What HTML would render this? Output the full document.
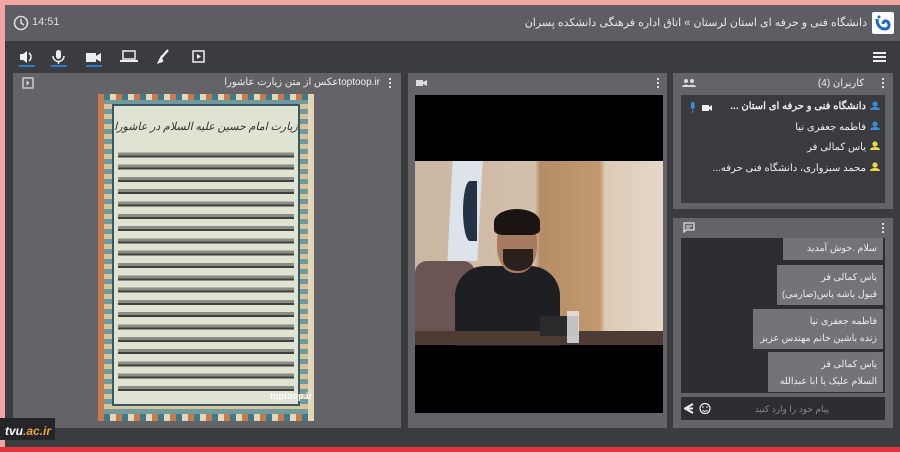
<!DOCTYPE html>
<html><head><meta charset="utf-8"><style>
*{margin:0;padding:0;box-sizing:border-box}
body{width:900px;height:452px;overflow:hidden;background:#3b3c40;font-family:"Liberation Sans","Noto Sans CJK SC",sans-serif;position:relative;color:#fff}
.a{position:absolute}
.rtl{direction:rtl;white-space:nowrap}
</style></head><body>
<div class="a" style="left:0;top:0;width:900px;height:5px;background:#f2a5a5"></div>
<div class="a" style="left:0;top:0;width:5px;height:452px;background:#f2a5a5"></div>
<div class="a" style="left:5px;top:5px;width:895px;height:36px;background:#5d5e63"></div>
<svg class="a" style="left:13px;top:15px" width="16" height="16" viewBox="0 0 16 16"><circle cx="8" cy="8" r="6.5" fill="none" stroke="#ddd" stroke-width="1.6"/><path d="M8 4v4l3 2" stroke="#ddd" stroke-width="1.5" fill="none"/></svg>
<div class="a" style="left:32px;top:16px;font-size:11px;color:#ddd">14:51</div>
<div class="a rtl" style="right:33px;top:16px;font-size:11px;color:#e8e8e8">دانشگاه فنی و حرفه ای استان لرستان » اتاق اداره فرهنگی دانشکده پسران</div>
<div class="a" style="left:872px;top:12px;width:22px;height:22px;background:#fff;border-radius:2px"><svg width="22" height="22" viewBox="0 0 22 22"><path d="M5 7c0 7 4 10 8 10s5-4 3-7c-2-2-5-1-5 2" fill="none" stroke="#1b6bc6" stroke-width="3"/><circle cx="7" cy="5" r="1.5" fill="#1b6bc6"/></svg></div>
<svg class="a" style="left:18px;top:48px" width="110" height="20" viewBox="0 0 110 20">
<path d="M2 6h3l4-3v12l-4-3H2z" fill="#eee"/><path d="M11 5a5 5 0 0 1 0 8" stroke="#eee" stroke-width="1.5" fill="none"/>
<rect x="1" y="17" width="16" height="2" fill="#2a7ad1"/>
<rect x="38" y="2" width="5" height="9" rx="2.5" fill="#eee"/><path d="M35 8a5.5 5.5 0 0 0 11 0M40.5 13v3" stroke="#eee" stroke-width="1.5" fill="none"/>
<rect x="33" y="17" width="16" height="2" fill="#2a7ad1"/>
<rect x="68" y="5" width="10" height="9" fill="#eee"/><path d="M78 8l5-3v9l-5-3z" fill="#eee"/>
<rect x="68" y="17" width="16" height="2" fill="#2a7ad1"/>
</svg>
<svg class="a" style="left:120px;top:48px" width="100" height="20" viewBox="0 0 100 20">
<rect x="3" y="3" width="12" height="8" fill="none" stroke="#eee" stroke-width="1.5"/><rect x="0" y="12" width="18" height="2" fill="#eee"/>
<path d="M48 2l-7 8M41 10l-2 4 3-1z" stroke="#eee" stroke-width="2.2" fill="#eee"/>
<rect x="73" y="3" width="11" height="11" fill="none" stroke="#eee" stroke-width="1.5"/><path d="M77 6l4 2.5-4 2.5z" fill="#eee"/>
</svg>
<div class="a" style="left:873px;top:52px;width:13px;height:2px;background:#eee;box-shadow:0 4px #eee,0 8px #eee"></div>
<div class="a" style="left:13px;top:73px;width:388px;height:355px;background:#636368"></div>
<svg class="a" style="left:22px;top:77px" width="12" height="12"><rect x="1" y="1" width="10" height="10" fill="none" stroke="#ddd" stroke-width="1.3"/><path d="M4.5 3.5l3 2.5-3 2.5z" fill="#ddd"/></svg>
<div class="a rtl" style="right:520px;top:77px;font-size:10px;color:#eee">toptoop.irعکس از متن زیارت عاشورا</div>
<div class="a" style="left:389px;top:78px;width:2px;height:2px;background:#ddd;box-shadow:0 4px #ddd,0 8px #ddd"></div>
<div class="a" style="left:98px;top:94px;width:216px;height:327px;background:repeating-linear-gradient(90deg,#c77a4c 0 6px,#3f7a86 6px 12px,#e4d7b8 12px 18px);"></div>
<div class="a" style="left:104px;top:100px;width:204px;height:314px;background:repeating-linear-gradient(0deg,#6f9a9e 0 5px,#d8c49a 5px 10px)"></div>
<div class="a" style="left:112px;top:104px;width:188px;height:302px;background:#dfe3d2;border:2px solid #3b5565;overflow:hidden">
<div class="a rtl" style="left:0;top:14px;width:184px;font-size:11px;color:#333;text-align:center;font-family:'Liberation Serif',serif;font-style:italic">زیارت امام حسین علیه السلام در عاشورا</div>
</div>
<div class="a" style="left:118px;top:150px;width:176px;height:245px;background:repeating-linear-gradient(0deg,#dfe3d2 0 4px,#3d403c 4px 6px,#8a8d84 6px 9px,#dfe3d2 9px 12.3px)"></div>
<div class="a" style="left:270px;top:391px;font-size:9px;color:#fff;font-weight:bold">toptoop.ir</div>
<div class="a" style="left:408px;top:73px;width:259px;height:355px;background:#636368"></div>
<svg class="a" style="left:416px;top:78px" width="12" height="10"><rect x="0" y="2" width="7" height="6" fill="#ddd"/><path d="M7 4l4-2v6l-4-2z" fill="#ddd"/></svg>
<div class="a" style="left:657px;top:78px;width:2px;height:2px;background:#ddd;box-shadow:0 4px #ddd,0 8px #ddd"></div>
<div class="a" style="left:415px;top:95px;width:248px;height:318px;background:#000;overflow:hidden">
 <div class="a" style="left:0;top:66px;width:248px;height:184px;background:linear-gradient(90deg,#cbb7a1 0,#d3c0aa 120px,#b48d66 125px,#c29a70 185px,#dcc9b5 190px,#e6d8c8 248px)">
  <div class="a" style="left:35px;top:0;width:30px;height:100px;background:#dde3ea;transform:skewX(-3deg)"></div>
  <div class="a" style="left:48px;top:20px;width:14px;height:60px;background:#233244;border-radius:50% 0 0 50%"></div>
  <div class="a" style="left:0;top:100px;width:60px;height:84px;background:#6b5452;border-radius:12px 12px 0 0"></div>
  <div class="a" style="left:40px;top:105px;width:105px;height:80px;background:#1e1f22;border-radius:30px 30px 0 0"></div>
  <div class="a" style="left:82px;top:54px;width:40px;height:58px;background:#a87a5f;border-radius:45%"></div>
  <div class="a" style="left:79px;top:48px;width:46px;height:26px;background:#1a1512;border-radius:50% 50% 20% 20%"></div>
  <div class="a" style="left:88px;top:88px;width:30px;height:22px;background:#2b211c;border-radius:0 0 50% 50%"></div>
  <div class="a" style="left:0;top:170px;width:248px;height:14px;background:#4c3c33"></div>
  <div class="a" style="left:125px;top:155px;width:38px;height:20px;background:#2a2a2c"></div>
  <div class="a" style="left:152px;top:150px;width:12px;height:32px;background:#e8e8ec;opacity:.8"></div>
 </div>
</div>
<div class="a" style="left:673px;top:73px;width:220px;height:136px;background:#636368"></div>
<svg class="a" style="left:682px;top:78px" width="14" height="10"><circle cx="4" cy="3" r="2" fill="#ddd"/><circle cx="10" cy="3" r="2" fill="#ddd"/><path d="M0 9c0-3 8-3 8 0zM6 9c0-3 8-3 8 0z" fill="#ddd"/></svg>
<div class="a rtl" style="right:36px;top:78px;font-size:10px;color:#eee">کاربران (4)</div>
<div class="a" style="left:882px;top:78px;width:2px;height:2px;background:#ddd;box-shadow:0 4px #ddd,0 8px #ddd"></div>
<div class="a" style="left:681px;top:95px;width:204px;height:108px;background:#3a3b3f"></div>
<div class="a rtl" style="right:34px;top:97px;font-size:10px;line-height:20.5px;color:#eee;text-align:right">
<div style="font-weight:bold">دانشگاه فنی و حرفه ای استان ...</div><div>فاطمه جعفری نیا</div><div>یاس کمالی فر</div><div>محمد سبزواری، دانشگاه فنی حرفه...</div></div>
<svg class="a" style="left:869px;top:100px" width="12" height="72"><g fill="#3a8ae0"><circle cx="6" cy="4" r="2.6"/><path d="M1 10c0-4 10-4 10 0z"/><circle cx="6" cy="24" r="2.6"/><path d="M1 30c0-4 10-4 10 0z"/></g><g fill="#e8d84a"><circle cx="6" cy="44" r="2.6"/><path d="M1 50c0-4 10-4 10 0z"/><circle cx="6" cy="65" r="2.6"/><path d="M1 71c0-4 10-4 10 0z"/></g></svg>
<svg class="a" style="left:688px;top:102px" width="26" height="12"><rect x="3" y="0" width="3.5" height="7" rx="1.7" fill="#3a8ae0"/><path d="M4.7 8v3" stroke="#3a8ae0"/><rect x="14" y="3" width="7" height="6" fill="#eee"/><path d="M21 5l3-2v6l-3-2z" fill="#eee"/></svg>
<div class="a" style="left:673px;top:218px;width:220px;height:210px;background:#636368"></div>
<svg class="a" style="left:683px;top:222px" width="12" height="11"><path d="M1 1h10v7H3l-2 2z" fill="none" stroke="#ddd" stroke-width="1.3"/><path d="M3 4h6M3 6h4" stroke="#ddd"/></svg>
<div class="a" style="left:882px;top:223px;width:2px;height:2px;background:#ddd;box-shadow:0 4px #ddd,0 8px #ddd"></div>
<div class="a" style="left:681px;top:238px;width:204px;height:155px;background:#2d2e31"></div>
<div class="a rtl" style="left:783px;top:238px;width:100px;height:22px;background:#737378;font-size:9.5px;padding:5px 6px;color:#eee">سلام .خوش آمدید</div>
<div class="a rtl" style="left:777px;top:265px;width:106px;height:40px;background:#737378;font-size:9.5px;padding:4px 6px;line-height:17px;color:#eee"><div>یاس کمالی فر</div><div>قبول باشه یاس(صارمی)</div></div>
<div class="a rtl" style="left:753px;top:309px;width:130px;height:40px;background:#737378;font-size:9.5px;padding:4px 6px;line-height:17px;color:#eee"><div>فاطمه جعفری نیا</div><div>زنده باشین خانم مهندس عزیز</div></div>
<div class="a rtl" style="left:768px;top:352px;width:115px;height:40px;background:#737378;font-size:9.5px;padding:4px 6px;line-height:17px;color:#eee"><div>یاس کمالی فر</div><div>السلام علیک یا ابا عبدالله</div></div>
<div class="a" style="left:681px;top:397px;width:204px;height:23px;background:#2d2e31"></div>
<div class="a rtl" style="right:71px;top:404px;font-size:9px;color:#888">پیام خود را وارد کنید</div>
<svg class="a" style="left:684px;top:402px" width="30" height="13"><path d="M9 2L1 6.5 9 11" stroke="#eee" stroke-width="2" fill="none"/><path d="M1 6.5h8" stroke="#eee" stroke-width="2"/><circle cx="21" cy="6.5" r="5" fill="none" stroke="#eee" stroke-width="1.2"/><circle cx="19" cy="5" r=".8" fill="#eee"/><circle cx="23" cy="5" r=".8" fill="#eee"/><path d="M18.5 8a3 3 0 0 0 5 0" stroke="#eee" fill="none"/></svg>
<div class="a" style="left:5px;top:428px;width:895px;height:19px;background:#3b3c40"></div>
<div class="a" style="left:0;top:418px;width:55px;height:22px;background:#242528"></div>
<div class="a" style="left:5px;top:424px;font-size:12px;font-weight:bold;font-style:italic;color:#fff">tvu<span style="color:#e8a43a">.ac.ir</span></div>
<div class="a" style="left:0;top:447px;width:900px;height:5px;background:#e3343c"></div>
</body></html>
